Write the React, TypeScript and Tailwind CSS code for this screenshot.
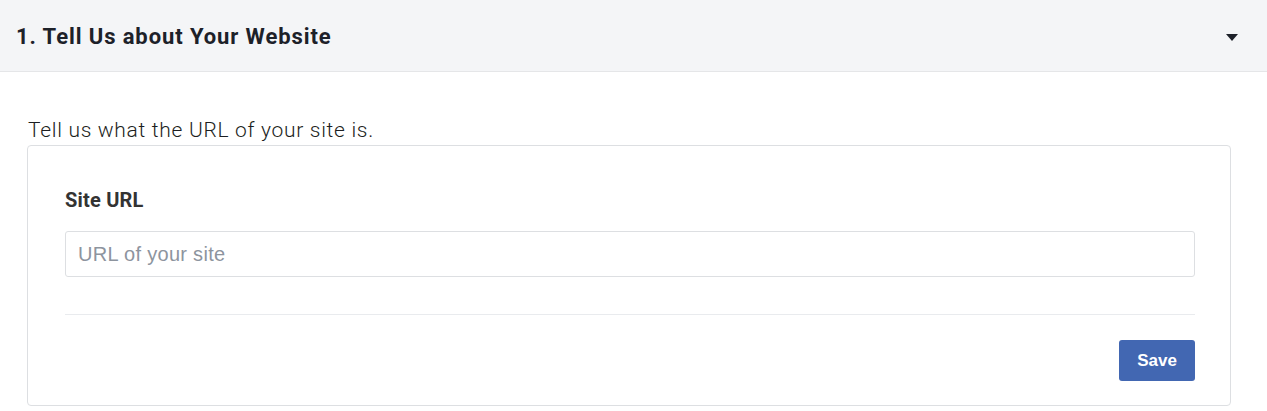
export default function App() {
  return (
    <div className="min-h-screen w-full bg-white font-['Roboto',sans-serif] text-[#1c1e21]">
      <div className="flex h-[72px] items-center justify-between border-b border-[#e5e6e8] bg-[#f4f5f7] pl-4 pr-[29px]">
        <h2 className="mt-[2px] text-[22px] font-bold tracking-[0.9px] text-[#1d2129]">1. Tell Us about Your Website</h2>
        <svg width="12" height="7" viewBox="0 0 12 7" className="mt-[3px]">
          <path d="M0 0h12L6 7z" fill="#1d2129" />
        </svg>
      </div>
      <div className="pl-[27px] pr-[36px] pt-[45px]">
        <p className="pl-[1px] text-[21px] font-light leading-[26px] tracking-[0.7px] text-[#1c1e21]">
          Tell us what the URL of your site is.
        </p>
        <div className="mt-[2px] rounded-[4px] border border-[#dddfe2] pl-[37px] pr-[35px] pb-[24px] pt-[43px]">
          <label className="block text-[20px] font-bold leading-[22px] tracking-[0.2px] text-[#333]">Site URL</label>
          <input
            type="text"
            placeholder="URL of your site"
            className="mt-[20px] h-[46px] w-full rounded-[3px] border border-[#dddfe2] px-3 font-['Liberation_Sans',sans-serif] text-[20px] tracking-[0.3px] text-[#1c1e21] placeholder:text-[#8d949e] outline-none"
          />
          <div className="mt-[37px] border-t border-[#e9ebee]" />
          <div className="mt-[25px] flex justify-end">
            <button className="h-[41px] w-[76px] rounded-[3px] bg-[#4267b2] font-['Liberation_Sans',sans-serif] text-[17px] font-bold text-white">
              Save
            </button>
          </div>
        </div>
      </div>
    </div>
  );
}
